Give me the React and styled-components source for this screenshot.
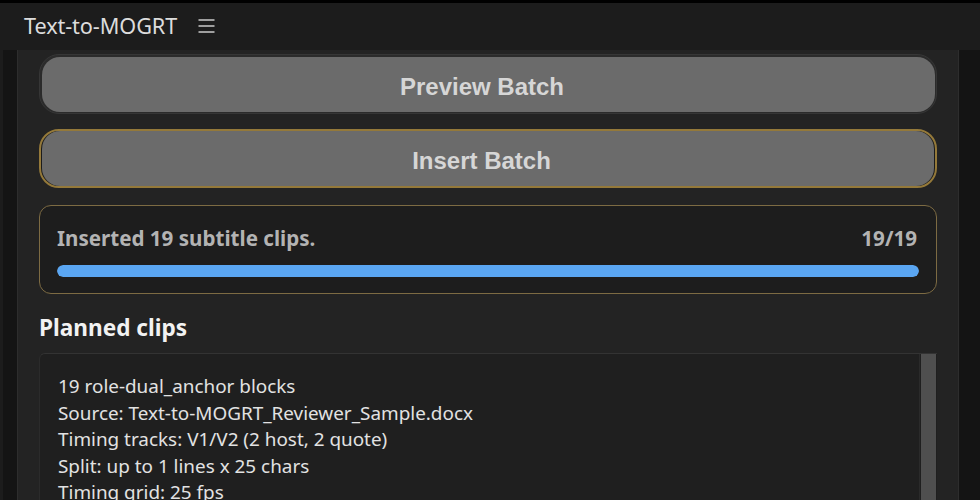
import React from "react";
import styled, { createGlobalStyle } from "styled-components";

const GlobalStyle = createGlobalStyle`
  html, body {
    margin: 0;
    padding: 0;
    background: #141414;
    overflow: hidden;
  }
  * { box-sizing: border-box; }
`;

const Frame = styled.div`
  width: 980px;
  height: 500px;
  display: flex;
  flex-direction: column;
  border-top: 3px solid #000;
  background: #1c1c1c;
`;

const Header = styled.header`
  height: 47px;
  flex: none;
  display: flex;
  align-items: center;
  gap: 21px;
  padding: 0 0 2px 24px;
  background: #1c1c1c;
`;

const AppTitle = styled.h1`
  margin: 0;
  font-family: "Noto Sans", "Open Sans", sans-serif;
  font-weight: 400;
  font-size: 21.7px;
  color: #dcdcdc;
  letter-spacing: -0.1px;
`;

const MenuButton = styled.button`
  border: none;
  background: none;
  padding: 0;
  display: flex;
  color: #c9c9c9;
  cursor: pointer;
`;

const Body = styled.div`
  flex: 1;
  display: flex;
  min-height: 0;
`;

const Gutter = styled.div`
  flex: none;
  width: ${(p) => p.width}px;
  background: #141414;
  border-left: ${(p) => (p.left ? "3px solid #1c1c1c" : "none")};
`;

const Panel = styled.main`
  flex: 1;
  min-width: 0;
  background: #232323;
  border-left: 1px solid #2d2d2d;
  border-right: 1px solid #2d2d2d;
  padding: 4px 21px 0 21px;
  display: flex;
  flex-direction: column;
  overflow: hidden;
`;

const ButtonFrame = styled.div`
  height: ${(p) => (p.active ? 59 : 60)}px;
  border-radius: 20px;
  padding: ${(p) => (p.active ? "0 1px" : "2px 1px 1px 2px")};
  border: ${(p) => (p.active ? "2px solid #94793a" : "1px solid #363636")};
  background: ${(p) => (p.active ? "#1c1c1c" : "#2b2b2b")};
  display: flex;
  align-items: center;
`;

const BigButton = styled.button`
  width: 100%;
  height: 55px;
  border: none;
  border-radius: 18px;
  background: #6b6b6b;
  color: #d6d6d6;
  font-family: "Liberation Sans", Arial, sans-serif;
  font-weight: 700;
  font-size: 24px;
  padding: 5px 13px 0 0;
  cursor: pointer;
`;

const Stack = styled.div`
  display: flex;
  flex-direction: column;
  gap: 15px;
`;

const StatusBox = styled.section`
  margin-top: 17px;
  height: 89px;
  border: 1.5px solid #7d6b43;
  border-radius: 12px;
  background: #1d1d1d;
  padding: 18px 17px 0 17px;
`;

const StatusRow = styled.div`
  display: flex;
  justify-content: space-between;
  align-items: center;
  padding-right: 2px;
  font-family: "Noto Sans", "Open Sans", sans-serif;
  font-weight: 700;
  font-size: 20.6px;
  line-height: 28px;
  color: #b3b3b3;
`;

const Track = styled.div`
  margin-top: 13px;
  height: 12px;
  border-radius: 6px;
  background: #333;
  overflow: hidden;
`;

const Fill = styled.div`
  height: 100%;
  border-radius: 6px;
  background: #5aa6f2;
`;

const SectionTitle = styled.h2`
  margin: 20px 0 11px;
  font-family: "Noto Sans", "Open Sans", sans-serif;
  font-weight: 700;
  font-size: 22.6px;
  line-height: 28px;
  color: #f2f2f2;
`;

const ListBox = styled.div`
  flex: 1;
  display: flex;
  border-top: 1.5px solid #333;
  border-left: 1px solid #2b2b2b;
  border-radius: 6px 0 0 0;
  background: #1f1f1f;
  min-height: 0;
`;

const ListText = styled.div`
  flex: 1;
  padding: 19px 18px 0;
  font-family: "Noto Sans", "Open Sans", sans-serif;
  font-size: 18.9px;
  line-height: 26.6px;
  color: #e2e2e2;
  white-space: nowrap;
`;

const ScrollBar = styled.div`
  flex: none;
  width: 18px;
  background: #1f1f1f;
  border-left: 1px solid #2a2a2a;
  padding: 0 1px 0 1px;
  display: flex;
`;

const Thumb = styled.div`
  flex: 1;
  background: #4f4f4f;
`;

const MenuIcon = () => (
  <svg width="17" height="14" viewBox="0 0 17 14" fill="none">
    <path d="M0.5 1h16M0.5 7h16M0.5 13h16" stroke="currentColor" strokeWidth="1.6" />
  </svg>
);

const lines = [
  "19 role-dual_anchor blocks",
  "Source: Text-to-MOGRT_Reviewer_Sample.docx",
  "Timing tracks: V1/V2 (2 host, 2 quote)",
  "Split: up to 1 lines x 25 chars",
  "Timing grid: 25 fps",
];

const done = 19;
const total = 19;

export default function App() {
  return (
    <>
      <GlobalStyle />
      <Frame>
        <Header>
          <AppTitle>Text-to-MOGRT</AppTitle>
          <MenuButton aria-label="menu">
            <MenuIcon />
          </MenuButton>
        </Header>
        <Body>
          <Gutter width={17} left />
          <Panel>
            <Stack>
              <ButtonFrame>
                <BigButton>Preview Batch</BigButton>
              </ButtonFrame>
              <ButtonFrame active>
                <BigButton>Insert Batch</BigButton>
              </ButtonFrame>
            </Stack>
            <StatusBox>
              <StatusRow>
                <span>Inserted 19 subtitle clips.</span>
                <span>
                  {done}/{total}
                </span>
              </StatusRow>
              <Track>
                <Fill style={{ width: `${(done / total) * 100}%` }} />
              </Track>
            </StatusBox>
            <SectionTitle>Planned clips</SectionTitle>
            <ListBox>
              <ListText>
                {lines.map((l) => (
                  <div key={l}>{l}</div>
                ))}
              </ListText>
              <ScrollBar>
                <Thumb />
              </ScrollBar>
            </ListBox>
          </Panel>
          <Gutter width={21} />
        </Body>
      </Frame>
    </>
  );
}
